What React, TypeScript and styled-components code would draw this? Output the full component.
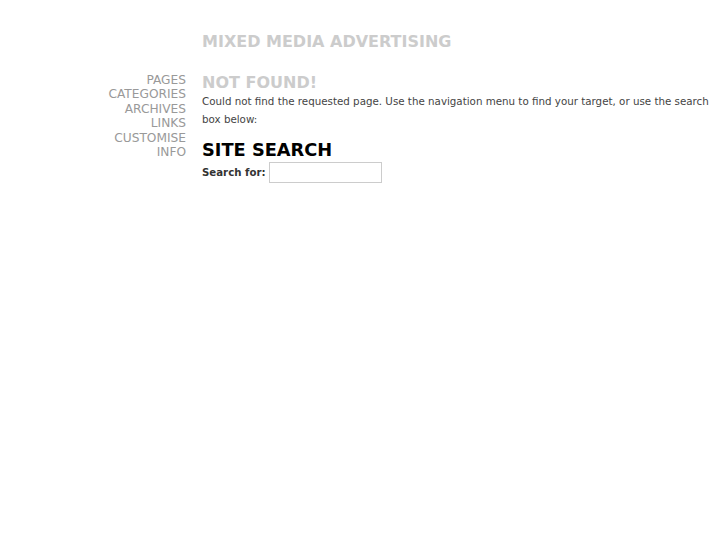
import React from "react";
import styled, { createGlobalStyle } from "styled-components";

const GlobalStyle = createGlobalStyle`
  html, body {
    margin: 0;
    padding: 0;
    background: #fff;
    font-family: "DejaVu Sans", Verdana, sans-serif;
  }
`;

const Page = styled.div`
  display: grid;
  grid-template-columns: 186px 1fr;
  column-gap: 16px;
  padding-top: 32px;
`;

const Header = styled.h1`
  grid-column: 2;
  margin: 0 0 21px;
  font-size: 16px;
  line-height: 20px;
  font-weight: bold;
  color: #ccc;
`;

const Nav = styled.ul`
  grid-column: 1;
  list-style: none;
  margin: 0;
  padding: 0;
  text-align: right;
`;

const NavItem = styled.li`
  font-size: 12.2px;
  line-height: 14.4px;
  color: #999;
  text-transform: uppercase;
`;

const Content = styled.div`
  grid-column: 2;
  padding-right: 12px;
`;

const Title = styled.h2<{ $dark?: boolean }>`
  margin: 0;
  font-size: ${(p) => (p.$dark ? "17.8px" : "16px")};
  line-height: ${(p) => (p.$dark ? "22px" : "19px")};
  font-weight: bold;
  color: ${(p) => (p.$dark ? "#000" : "#ccc")};
`;

const Text = styled.p`
  margin: 0 0 11px;
  font-size: 10.3px;
  line-height: 18px;
  color: #444;
`;

const SearchRow = styled.form`
  display: flex;
  align-items: center;
  gap: 3px;
  margin-top: 1px;
`;

const Label = styled.label`
  font-size: 10.2px;
  font-weight: bold;
  color: #333;
`;

const Input = styled.input`
  width: 107px;
  height: 15px;
  border: 1px solid #ccc;
  padding: 2px;
  font-family: inherit;
  font-size: 11px;
`;

const links = ["Pages", "Categories", "Archives", "Links", "Customise", "Info"];

export default function App() {
  return (
    <>
      <GlobalStyle />
      <Page>
        <Header>MIXED MEDIA ADVERTISING</Header>
        <Nav>
          {links.map((l) => (
            <NavItem key={l}>{l}</NavItem>
          ))}
        </Nav>
        <Content>
          <Title>NOT FOUND!</Title>
          <Text>
            Could not find the requested page. Use the navigation menu to find
            your target, or use the search box below:
          </Text>
          <Title $dark>SITE SEARCH</Title>
          <SearchRow onSubmit={(e) => e.preventDefault()}>
            <Label htmlFor="s">Search for:</Label>
            <Input id="s" type="text" />
          </SearchRow>
        </Content>
      </Page>
    </>
  );
}
